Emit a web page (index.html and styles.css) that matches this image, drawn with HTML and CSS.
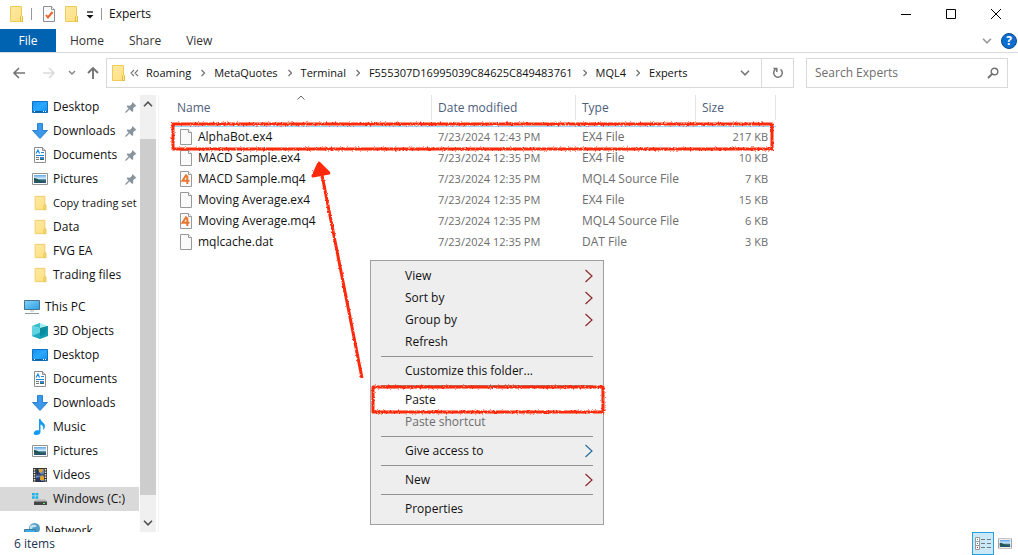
FILE: index.html
```html
<!DOCTYPE html>
<html lang="en">
<head>
<meta charset="utf-8">
<title>Experts</title>
<link rel="stylesheet" href="styles.css">
</head>
<body>
<svg class="defs" aria-hidden="true">
  <defs>
    <linearGradient id="gFolder" x1="0" y1="0" x2="1" y2="1"><stop offset="0" stop-color="#ffe9a3"/><stop offset="1" stop-color="#ffdf80"/></linearGradient>
    <linearGradient id="gBlue" x1="0" y1="0" x2="1" y2="1"><stop offset="0" stop-color="#1593f5"/><stop offset=".5" stop-color="#29a8ff"/><stop offset="1" stop-color="#1090f0"/></linearGradient>
    <linearGradient id="gSky" x1="0" y1="0" x2="0" y2="1"><stop offset="0" stop-color="#5fa8ec"/><stop offset=".45" stop-color="#d5ecfa"/><stop offset=".6" stop-color="#3c7484"/><stop offset="1" stop-color="#234f6b"/></linearGradient>
    <linearGradient id="gScreen" x1="0" y1="0" x2="1" y2="1"><stop offset="0" stop-color="#86d4f8"/><stop offset="1" stop-color="#2c9de6"/></linearGradient>
    <filter id="rough" x="-5%" y="-5%" width="110%" height="110%"><feTurbulence type="fractalNoise" baseFrequency=".6" numOctaves="2" seed="4"/><feDisplacementMap in="SourceGraphic" scale="3"/></filter>
  </defs>
  <symbol id="folder" viewBox="0 0 16 18"><path d="M2.500 1.500h11v9l1 1v5h-12z" fill="url(#gFolder)" stroke="#eccb5c"/><path d="M12.500 16.500v-5l1-1 1 1v5z" fill="#ffe79b" stroke="#e5bd3e"/></symbol>
  <symbol id="desktop" viewBox="0 0 16 16"><path d="M.5 2.500h15v11H.5z" fill="url(#gBlue)" stroke="#0f72c4"/><path d="M1 12h14v1.500H1z" fill="#0c62ab"/><path d="M2 12.500h1m8 0h1m1 0h1" stroke="#fff"/></symbol>
  <symbol id="download" viewBox="0 0 16 16"><path d="M5.500.5h5v7h5L8 15.500.5 7.500h5z" fill="#3c98e8" stroke="#2f80cd"/></symbol>
  <symbol id="document" viewBox="0 0 16 16"><path d="M2.500.5h8l3 3v12h-11z" fill="#fff" stroke="#8c8c8c"/><path d="M10.500.5v3h3" fill="#ddd" stroke="#8c8c8c"/><path d="M4 6.500 6 3l1.500 3.500M9 5.500h3M4 8.500h8" stroke="#1687dd" stroke-width="1.200" fill="none"/><path d="M4 10.500h3M4 12.500h3" stroke="#777"/><path d="M8 10h4v3H8z" fill="#3e83c7"/><path d="M8 12h4v1H8z" fill="#2d6862"/></symbol>
  <symbol id="picture" viewBox="0 0 16 12"><path d="M.5.5h15v11H.5z" fill="#fff" stroke="#949494"/><path d="M2 2h12v8H2z" fill="url(#gSky)"/><path d="M2 5q3 0 5 2t7 1l-5 1-7-1z" fill="#23544e"/></symbol>
  <symbol id="pc" viewBox="0 0 16 16"><path d="M.5 1.500h15v9H.5z" fill="url(#gScreen)" stroke="#47758f"/><path d="M6 11h4v2H6z" fill="#d4dce0"/><path d="M1 14.500h14" stroke="#8c9aa3"/></symbol>
  <symbol id="cube" viewBox="0 0 16 16"><path d="M0 3 8 5v11l-8-3z" fill="#5fd3df"/><path d="M16 3 8 5v11l8-3z" fill="#149bb0"/><path d="M0 3 8 0l8 3-8 2z" fill="#a5ecf1"/><path d="m4 1.500 4-1.500v5L0 3z" fill="#35bccd"/><path d="M0 13 8 9.500V16z" fill="#1fa9bf"/><path d="m8 5 8-2-3 8-5 2z" fill="#0c8aa0"/></symbol>
  <symbol id="music" viewBox="0 0 16 16"><path d="M7 0h1.500c.5 3 4.500 4 4.500 7 0 2-1 3-2 4 1-4-1-5-2.500-5.500V13c0 2-2 3-4 3-3 0-3.500-2-2-3.500 1-1 3-1.500 4.500-1z" fill="#149bf0"/></symbol>
  <symbol id="video" viewBox="0 0 16 16"><path d="M1 1h14v14H1z" fill="#343434"/><path d="M2.500 2v13M13.500 2v13" stroke="#e5e5e5" stroke-width="1.500" stroke-dasharray="1.500 1"/><path d="M4 2h8v5.500H4zM4 8.500h8V14H4z" fill="#5f86c4"/><path d="M4 2h2l1 3 2 2.500H4zM4 11l4-1 1 4H4z" fill="#29385c"/><path d="M7 2h4v2l-2 2-2-1zM8 10l2-2 2 2v3H8z" fill="#e0a42b"/></symbol>
  <symbol id="drive" viewBox="0 0 16 16"><path d="M0 2h2.800v2.500H0zM3.500 2h2.800v2.500H3.500zM0 5.200h2.800v2.500H0zM3.500 5.200h2.800v2.500H3.500z" fill="#18b4e8"/><path d="m2 10.500 2-2h9l2 2z" fill="#b5b5b5"/><path d="M2 10.500h13v3.500H2z" fill="#454545"/><path d="M11 12.500h2" stroke="#65ef76"/></symbol>
  <symbol id="network" viewBox="0 0 16 16"><circle cx="10.500" cy="5.500" r="5.500" fill="#4f9cc9"/><path d="M6 3q4-3 7 0-2 2-4 1-1 3-3 2z" fill="#c0e3ef"/><path d="M.5 6.500h11v6H.5z" fill="#3ca9e8" stroke="#427b9c"/></symbol>
  <symbol id="pin" viewBox="0 0 12 12"><path d="m7.500 1 4 4-1.500.5-2 2 .3 2.500-1 1L1.500 5.500l1-1 2.500.3 2-2z" fill="#87939d"/><path d="m4.500 7.500-4 4" stroke="#87939d" stroke-width="1.300"/></symbol>
  <symbol id="file" viewBox="0 0 14 16"><path d="M1.500.5h8l3 3v12h-11z" fill="#fafafa" stroke="#999"/><path d="M9.500.5v3h3" fill="#fff" stroke="#999"/></symbol>
  <symbol id="mq" viewBox="0 0 14 16"><use href="#file"/><path d="M7.500 3.500 3.500 9.700h7M8.300 4.500V13" fill="none" stroke="#e9762d" stroke-width="2"/></symbol>
  <symbol id="chev" viewBox="0 0 8 14"><path d="m.5 1 6.500 6-6.500 6" fill="none" stroke="currentColor" stroke-width="1.200"/></symbol>
  <symbol id="crumb" viewBox="0 0 4 8"><path d="m.5 1 3 3-3 3" fill="none" stroke="#777" stroke-width="1.300"/></symbol>
  <symbol id="down" viewBox="0 0 10 6"><path d="m1 .8 4 4 4-4" fill="none" stroke="currentColor" stroke-width="1.600"/></symbol>
</svg>

<header class="titlebar">
  <svg class="i18"><use href="#folder"/></svg>
  <span class="bar"></span>
  <svg class="props" viewBox="0 0 14 16"><path d="M1.500.5h8l3 3v12h-11z" fill="#f8fafc" stroke="#8a8f96"/><path d="M9.500.5v3h3" fill="#fff" stroke="#8a8f96"/><path d="m4 9 2 2.500L10.500 6" fill="none" stroke="#ec6427" stroke-width="2"/></svg>
  <svg class="i18 second"><use href="#folder"/></svg>
  <svg class="custom" viewBox="0 0 8 8"><path d="M1 1h6" stroke="#111" stroke-width="1.300"/><path d="M.5 4h7L4 7.500z" fill="#111"/></svg>
  <span class="bar"></span>
  <h1>Experts</h1>
  <div class="winbtns">
    <button aria-label="Minimize"><svg viewBox="0 0 12 12"><path d="M1 6.500h10" stroke="#000"/></svg></button>
    <button aria-label="Maximize"><svg viewBox="0 0 12 12"><path d="M1.500 1.500h9v9h-9z" fill="none" stroke="#000"/></svg></button>
    <button aria-label="Close"><svg viewBox="0 0 12 12"><path d="m1 1 10 10M11 1 1 11" stroke="#000"/></svg></button>
  </div>
</header>

<nav class="ribbon" aria-label="Ribbon">
  <button class="file">File</button>
  <button>Home</button>
  <button>Share</button>
  <button>View</button>
  <div class="ribbon-end">
    <button aria-label="Expand ribbon"><svg class="expand"><use href="#down"/></svg></button>
    <button class="help" aria-label="Help"><span>?</span></button>
  </div>
</nav>

<div class="address">
  <div class="history">
    <button aria-label="Back"><svg viewBox="0 0 14 12"><path d="M13 6H2m5-5L2 6l5 5" fill="none" stroke="#747474" stroke-width="1.600"/></svg></button>
    <button aria-label="Forward"><svg viewBox="0 0 14 12"><path d="M1 6h11M7 1l5 5-5 5" fill="none" stroke="#dadada" stroke-width="1.600"/></svg></button>
    <button class="recent" aria-label="Recent locations"><svg viewBox="0 0 8 6"><path d="m1 1 3 3 3-3" fill="none" stroke="#888" stroke-width="1.500"/></svg></button>
    <button class="up" aria-label="Up"><svg viewBox="0 0 12 14"><path d="M6 13V2M1 7l5-5 5 5" fill="none" stroke="#747474" stroke-width="1.900"/></svg></button>
  </div>
  <div class="path">
    <svg class="i18"><use href="#folder"/></svg>
    <svg class="double" viewBox="0 0 9 8"><path d="M4 1 1 4l3 3M8 1 5 4l3 3" fill="none" stroke="#777" stroke-width="1.100"/></svg>
    <button>Roaming</button><svg class="crumb"><use href="#crumb"/></svg>
    <button>MetaQuotes</button><svg class="crumb"><use href="#crumb"/></svg>
    <button>Terminal</button><svg class="crumb"><use href="#crumb"/></svg>
    <button>F555307D16995039C84625C849483761</button><svg class="crumb"><use href="#crumb"/></svg>
    <button>MQL4</button><svg class="crumb"><use href="#crumb"/></svg>
    <button>Experts</button>
    <button class="drop" aria-label="Previous locations"><svg><use href="#down"/></svg></button>
    <button class="refresh" aria-label="Refresh"><svg viewBox="0 0 12 12"><path d="M8.500 2.400a4.300 4.300 0 1 1-5 0M1.500 1.500h3.300v3.400" fill="none" stroke="#747474" stroke-width="1.500"/></svg></button>
  </div>
  <label class="search">
    <input type="text" placeholder="Search Experts" aria-label="Search Experts">
    <svg viewBox="0 0 12 12"><circle cx="7.500" cy="4.500" r="3.300" fill="none" stroke="#707070" stroke-width="1.400"/><path d="M5.200 6.800 1 11" stroke="#707070" stroke-width="1.900"/></svg>
  </label>
</div>

<main class="body">
  <nav class="tree" aria-label="Folders">
    <ul>
      <li><svg><use href="#desktop"/></svg>Desktop<svg class="pin"><use href="#pin"/></svg></li>
      <li><svg><use href="#download"/></svg>Downloads<svg class="pin"><use href="#pin"/></svg></li>
      <li><svg><use href="#document"/></svg>Documents<svg class="pin"><use href="#pin"/></svg></li>
      <li><svg><use href="#picture"/></svg>Pictures<svg class="pin"><use href="#pin"/></svg></li>
      <li class="long"><svg><use href="#folder"/></svg>Copy trading set</li>
      <li><svg><use href="#folder"/></svg>Data</li>
      <li><svg><use href="#folder"/></svg>FVG EA</li>
      <li><svg><use href="#folder"/></svg>Trading files</li>
    </ul>
    <ul>
      <li class="root"><svg><use href="#pc"/></svg>This PC</li>
      <li><svg><use href="#cube"/></svg>3D Objects</li>
      <li><svg><use href="#desktop"/></svg>Desktop</li>
      <li><svg><use href="#document"/></svg>Documents</li>
      <li><svg><use href="#download"/></svg>Downloads</li>
      <li><svg><use href="#music"/></svg>Music</li>
      <li><svg><use href="#picture"/></svg>Pictures</li>
      <li><svg><use href="#video"/></svg>Videos</li>
      <li class="current"><svg><use href="#drive"/></svg>Windows (C:)</li>
    </ul>
    <ul>
      <li class="root"><svg><use href="#network"/></svg>Network</li>
    </ul>
  </nav>
  <div class="scrollbar" aria-hidden="true">
    <svg class="flip"><use href="#down"/></svg>
    <div class="thumb"></div>
    <svg><use href="#down"/></svg>
  </div>
  <section class="files">
    <table>
      <colgroup><col class="c-name"><col class="c-date"><col class="c-type"><col class="c-size"></colgroup>
      <thead>
        <tr><th>Name<svg class="sort" viewBox="0 0 8 5"><path d="m.5 4.500 3.500-3.500 3.500 3.500" fill="none" stroke="#666"/></svg></th><th>Date modified</th><th>Type</th><th>Size</th></tr>
      </thead>
      <tbody>
        <tr class="focus"><td><svg><use href="#file"/></svg>AlphaBot.ex4</td><td>7/23/2024 12:43 PM</td><td>EX4 File</td><td>217 KB</td></tr>
        <tr><td><svg><use href="#file"/></svg>MACD Sample.ex4</td><td>7/23/2024 12:35 PM</td><td>EX4 File</td><td>10 KB</td></tr>
        <tr><td><svg><use href="#mq"/></svg>MACD Sample.mq4</td><td>7/23/2024 12:35 PM</td><td>MQL4 Source File</td><td>7 KB</td></tr>
        <tr><td><svg><use href="#file"/></svg>Moving Average.ex4</td><td>7/23/2024 12:35 PM</td><td>EX4 File</td><td>15 KB</td></tr>
        <tr><td><svg><use href="#mq"/></svg>Moving Average.mq4</td><td>7/23/2024 12:35 PM</td><td>MQL4 Source File</td><td>6 KB</td></tr>
        <tr><td><svg><use href="#file"/></svg>mqlcache.dat</td><td>7/23/2024 12:35 PM</td><td>DAT File</td><td>3 KB</td></tr>
      </tbody>
    </table>
  </section>
</main>

<footer class="status">
  <span>6 items</span>
  <div class="views">
    <button class="on" aria-label="Details view"><svg viewBox="0 0 16 14"><path d="M.5.500h4v4h-4zM.5 4.500h4v4h-4zM.5 8.500h4v4h-4z" fill="#fff" stroke="#999"/><path d="M2 2.500h1" stroke="#777"/><path d="M2 6.500h1" stroke="#1583df"/><path d="M2 10.500h1" stroke="#d22"/><path d="M6 2.500h4m2 0h4M6 6.500h4m2 0h4M6 10.500h4m2 0h4" stroke="#707a80"/></svg></button>
    <button aria-label="Thumbnail view"><svg viewBox="0 0 16 12"><use href="#picture"/></svg></button>
  </div>
</footer>

<div class="menu" role="menu">
  <button role="menuitem">View<svg><use href="#chev"/></svg></button>
  <button role="menuitem">Sort by<svg><use href="#chev"/></svg></button>
  <button role="menuitem">Group by<svg><use href="#chev"/></svg></button>
  <button role="menuitem">Refresh</button>
  <hr>
  <button role="menuitem">Customize this folder...</button>
  <hr>
  <button role="menuitem" class="hot">Paste</button>
  <button role="menuitem" disabled>Paste shortcut</button>
  <hr>
  <button role="menuitem">Give access to<svg class="cool"><use href="#chev"/></svg></button>
  <hr>
  <button role="menuitem">New<svg><use href="#chev"/></svg></button>
  <hr>
  <button role="menuitem">Properties</button>
</div>

<svg class="marks" viewBox="0 0 620 420" aria-hidden="true">
  <g filter="url(#rough)" fill="none" stroke="#ff2a0a" stroke-width="3" stroke-linejoin="round">
    <rect x="173" y="124" width="599" height="25"/>
    <rect x="373" y="387" width="230" height="25"/>
    <path d="m362 378-40-203"/>
    <path d="m319 163 10 10-16 3z" fill="#ff2a0a"/>
  </g>
</svg>
</body>
</html>
```
FILE: styles.css
```css
* { box-sizing: border-box; }
body {
  margin: 0;
  height: 100vh;
  display: flex;
  flex-direction: column;
  position: relative;
  overflow: hidden;
  background: #fff;
  color: #111;
  font: 12px/16px "Open Sans", "Noto Sans", sans-serif;
}
button { margin: 0; padding: 0; border: 0; background: none; color: inherit; font: inherit; }
svg { display: block; flex: none; }
.defs { position: absolute; width: 0; height: 0; }
.i18 { width: 16px; height: 18px; }

.titlebar { display: flex; align-items: center; height: 29px; padding: 0 0 2px 8px; }
.titlebar h1 { margin: 0 0 0 7px; font-size: 12px; font-weight: 400; }
.bar { width: 1px; height: 12px; margin-left: 7px; background: #999; }
.props { width: 14px; height: 16px; margin-left: 10px; }
.second { margin-left: 7px; }
.custom { width: 8px; height: 8px; margin: 2px 0 0 7px; }
.winbtns { display: flex; margin-left: auto; }
.winbtns button { display: grid; place-items: center; width: 45px; height: 27px; }
.winbtns svg { width: 12px; height: 12px; }

.ribbon { display: flex; height: 24px; border-bottom: 1px solid #dadbdc; color: #333; }
.ribbon > button { padding: 0 11px 0 14px; }
.ribbon > .file { width: 56px; padding: 0; background: #0063b1; color: #fff; }
.ribbon-end { display: flex; align-items: center; gap: 9px; margin-left: auto; color: #999; }
.expand { width: 10px; height: 6px; }
.help { width: 16px; height: 16px; margin-right: 1px; border: 1px solid #084d8c; border-radius: 50%; background: #0b6dd0; color: #fff; font-weight: 700; line-height: 14px; }

.address { display: flex; align-items: center; height: 42px; padding: 0 10px 2px 12px; }
.history { display: flex; align-items: center; width: 94px; }
.history svg { width: 14px; height: 12px; }
.history button + button { margin-left: 16px; }
.history .recent { margin-left: 12px; }
.history .recent svg { width: 8px; height: 6px; }
.history .up { margin-left: 11px; }
.history .up svg { width: 12px; height: 14px; }
.path { display: flex; align-items: center; flex: 1; height: 30px; border: 1px solid #d9d9d9; padding-left: 3px; font-size: 11px; }
.double { width: 9px; height: 8px; margin: 0 7px 0 4px; }
.crumb { width: 4px; height: 8px; margin: 0 9px 0 10px; }
.drop { margin: 0 11px 0 auto; color: #777; }
.drop svg { width: 10px; height: 6px; }
.refresh { display: grid; place-items: center; width: 32px; height: 28px; border-left: 1px solid #d9d9d9; }
.refresh svg { width: 12px; height: 12px; }
.search { display: flex; align-items: center; width: 202px; height: 30px; margin-left: 12px; padding: 0 8px; border: 1px solid #d9d9d9; }
.search input { flex: 1; min-width: 0; padding: 0; border: 0; outline: 0; font: inherit; }
.search input::placeholder { color: #6d6d6d; opacity: 1; }
.search svg { width: 12px; height: 12px; }

.body { display: flex; flex: 1; min-height: 0; }
.tree { width: 139px; overflow: hidden; }
.tree ul { list-style: none; margin: 0 0 8px; padding: 0; }
.tree li { display: flex; align-items: center; gap: 5px; height: 24px; padding-left: 32px; white-space: nowrap; }
.tree .long { font-size: 11px; }
.tree .root { padding-left: 24px; }
.tree .current { background: #d9d9d9; }
.tree svg { width: 16px; height: 16px; }
.tree .pin { width: 12px; height: 12px; margin: 0 2px 0 auto; }
.scrollbar { display: flex; flex-direction: column; align-items: center; width: 16px; margin-left: 1px; background: #f0f0f0; color: #505050; }
.scrollbar svg { width: 10px; height: 6px; margin: 6px 0; }
.scrollbar .flip { transform: rotate(180deg); }
.thumb { width: 16px; flex: 1; margin: 26px 0 19px; background: #cdcdcd; }
.files { flex: 1; margin-left: 2px; padding-left: 12px; border-left: 1px solid #f3f3f3; }

table { width: 605px; table-layout: fixed; border-collapse: separate; border-spacing: 0; }
.c-name { width: 261px; }
.c-date { width: 144px; }
.c-type { width: 120px; }
.c-size { width: 80px; }
th { position: relative; height: 25px; padding: 0 6px; border-right: 1px solid #e5e5e5; color: #4c607a; font-weight: 400; text-align: left; }
.sort { position: absolute; top: 0; left: calc(50% - 4px); width: 8px; height: 5px; }
thead::after { content: ""; display: block; height: 6px; }
td { height: 21px; padding: 0 8px 0 6px; color: #6d6d6d; white-space: nowrap; }
td:first-child { display: flex; align-items: center; gap: 5px; padding-left: 8px; color: #111; }
td:first-child svg { width: 14px; height: 16px; }
td:nth-child(2), td:last-child { font-size: 11px; }
td:last-child { text-align: right; }
.focus td { border-top: 1px solid #99d1ff; }

.status { display: flex; align-items: center; height: 23px; padding: 0 2px 0 14px; color: #1e3250; }
.views { display: flex; margin-left: auto; }
.views button { display: grid; place-items: center; width: 22px; height: 23px; }
.views .on { border: 1px solid #26a0da; background: #cbe8f6; }
.views svg { width: 16px; height: 14px; }
.views button:last-child svg { width: 14px; height: 11px; }

.menu { position: absolute; left: 370px; top: 260px; width: 234px; padding: 4px 2px; border: 1px solid #a0a0a0; background: #eee; }
.menu button { display: flex; align-items: center; justify-content: space-between; width: 100%; height: 22px; padding: 0 8px 0 32px; }
.menu button:disabled { color: #6d6d6d; }
.menu .hot { background: #fff; }
.menu svg { width: 8px; height: 14px; color: #8b2a2a; }
.menu .cool { color: #2a6f9b; }
.menu hr { height: 1px; margin: 3px 8px; border: 0; background: #919191; }
.marks { position: absolute; left: 0; top: 0; width: 620px; height: 420px; overflow: visible; pointer-events: none; }
```
